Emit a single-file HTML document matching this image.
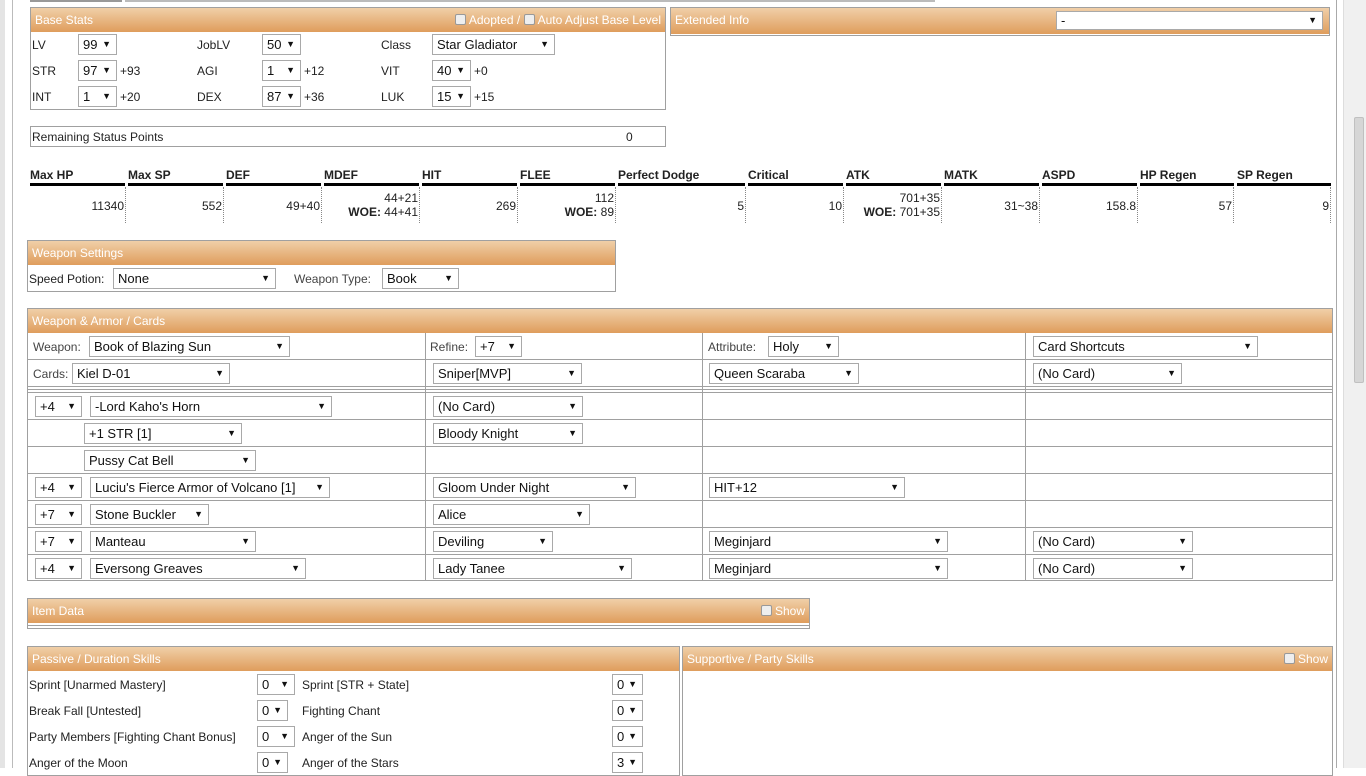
<!DOCTYPE html>
<html><head><meta charset="utf-8"><style>
*{box-sizing:border-box;margin:0;padding:0}
body{width:1366px;height:768px;overflow:hidden;background:#fff;font-family:"Liberation Sans",sans-serif;font-size:12px;color:#222;position:relative}
div,span{position:absolute}
.t{white-space:nowrap;line-height:14px}
.box{border:1px solid #a0a0a0;background:#fff}
.hd{background:linear-gradient(#f0cfa8,#df9d5c);color:#fff;white-space:nowrap;line-height:24px;padding-left:4px}
.s{border:1px solid #a9a9a9;background:#fff;height:21px;line-height:19px;padding-left:4px;white-space:nowrap;font-size:13px;color:#111}
.s:after{content:"▼";position:absolute;right:5px;top:0;font-size:9px}
.th{font-weight:bold;border-bottom:3px solid #000;height:18px;line-height:15px;padding-left:0;top:168px}
.td{top:187px;height:36px;border-right:1px dotted #888;text-align:right;padding-right:1px;line-height:14px}
.hl{height:1px;background:#a0a0a0}
.vl{width:1px;background:#a0a0a0}
.cb{display:inline-block;position:relative;width:11px;height:11px;border:1px solid #999;border-radius:2px;background:#eee;vertical-align:-1px;margin-right:3px}
</style></head><body>
<div style="left:0;top:0;width:5px;height:768px;background:#e4e4e4"></div>
<div style="left:12px;top:0;width:1px;height:768px;background:#bbb"></div>
<div style="left:1336px;top:0;width:1px;height:768px;background:#aaa"></div>
<div style="left:1343px;top:0;width:23px;height:768px;background:#f0f0f0;border-left:1px solid #ddd"></div>
<div style="left:1354px;top:117px;width:10px;height:266px;background:#d6d6d6;border:1px solid #c0c0c0;border-radius:2px"></div>
<div style="left:30px;top:0;width:92px;height:2px;background:#999"></div>
<div style="left:125px;top:0;width:810px;height:2px;background:#bbb"></div>

<div class="box" style="left:30px;top:7px;width:636px;height:103px"></div>
<div class="hd" style="left:31px;top:8px;width:634px;height:24px">Base Stats<span style="right:4px;top:0"><span class="cb"></span>Adopted / <span class="cb"></span>Auto Adjust Base Level</span></div>
<span class="t" style="left:32px;top:38px">LV</span><div class="s" style="left:78px;top:34px;width:39px">99</div>
<span class="t" style="left:197px;top:38px">JobLV</span><div class="s" style="left:262px;top:34px;width:39px">50</div>
<span class="t" style="left:381px;top:38px">Class</span><div class="s" style="left:432px;top:34px;width:123px">Star Gladiator</div>
<span class="t" style="left:32px;top:64px">STR</span><div class="s" style="left:78px;top:60px;width:39px">97</div><span class="t" style="left:120px;top:64px">+93</span>
<span class="t" style="left:197px;top:64px">AGI</span><div class="s" style="left:262px;top:60px;width:39px">1</div><span class="t" style="left:304px;top:64px">+12</span>
<span class="t" style="left:381px;top:64px">VIT</span><div class="s" style="left:432px;top:60px;width:39px">40</div><span class="t" style="left:474px;top:64px">+0</span>
<span class="t" style="left:32px;top:90px">INT</span><div class="s" style="left:78px;top:86px;width:39px">1</div><span class="t" style="left:120px;top:90px">+20</span>
<span class="t" style="left:197px;top:90px">DEX</span><div class="s" style="left:262px;top:86px;width:39px">87</div><span class="t" style="left:304px;top:90px">+36</span>
<span class="t" style="left:381px;top:90px">LUK</span><div class="s" style="left:432px;top:86px;width:39px">15</div><span class="t" style="left:474px;top:90px">+15</span>

<div class="box" style="left:670px;top:7px;width:660px;height:29px"></div>
<div class="hd" style="left:671px;top:8px;width:658px;height:26px">Extended Info</div>
<div class="s" style="left:1056px;top:11px;width:267px;height:19px;line-height:17px">-</div>

<div class="box" style="left:30px;top:126px;width:636px;height:21px"></div>
<span class="t" style="left:32px;top:130px">Remaining Status Points</span><span class="t" style="left:626px;top:130px">0</span>

<div class="th" style="left:30px;width:95px">Max HP</div>
<div class="th" style="left:128px;width:95px">Max SP</div>
<div class="th" style="left:226px;width:95px">DEF</div>
<div class="th" style="left:324px;width:95px">MDEF</div>
<div class="th" style="left:422px;width:95px">HIT</div>
<div class="th" style="left:520px;width:95px">FLEE</div>
<div class="th" style="left:618px;width:127px">Perfect Dodge</div>
<div class="th" style="left:748px;width:95px">Critical</div>
<div class="th" style="left:846px;width:95px">ATK</div>
<div class="th" style="left:944px;width:95px">MATK</div>
<div class="th" style="left:1042px;width:95px">ASPD</div>
<div class="th" style="left:1140px;width:94px">HP Regen</div>
<div class="th" style="left:1237px;width:94px">SP Regen</div>
<div class="td" style="left:30px;width:96px;padding-top:12px">11340</div>
<div class="td" style="left:126px;width:98px;padding-top:12px">552</div>
<div class="td" style="left:224px;width:98px;padding-top:12px">49+40</div>
<div class="td" style="left:322px;width:98px;padding-top:4px">44+21<br><b>WOE:</b> 44+41</div>
<div class="td" style="left:420px;width:98px;padding-top:12px">269</div>
<div class="td" style="left:518px;width:98px;padding-top:4px">112<br><b>WOE:</b> 89</div>
<div class="td" style="left:616px;width:130px;padding-top:12px">5</div>
<div class="td" style="left:746px;width:98px;padding-top:12px">10</div>
<div class="td" style="left:844px;width:98px;padding-top:4px">701+35<br><b>WOE:</b> 701+35</div>
<div class="td" style="left:942px;width:98px;padding-top:12px">31~38</div>
<div class="td" style="left:1040px;width:98px;padding-top:12px">158.8</div>
<div class="td" style="left:1138px;width:96px;padding-top:12px">57</div>
<div class="td" style="left:1234px;width:97px;padding-top:12px">9</div>

<div class="box" style="left:27px;top:240px;width:589px;height:52px"></div>
<div class="hd" style="left:28px;top:241px;width:587px;height:24px">Weapon Settings</div>
<span class="t" style="left:29px;top:272px">Speed Potion:</span><div class="s" style="left:113px;top:268px;width:163px">None</div>
<span class="t" style="left:294px;top:272px;color:#444">Weapon Type:</span><div class="s" style="left:382px;top:268px;width:77px">Book</div>

<div class="box" style="left:27px;top:308px;width:1306px;height:273px"></div>
<div class="hd" style="left:28px;top:309px;width:1304px;height:24px">Weapon &amp; Armor / Cards</div>
<div class="hl" style="left:28px;top:359px;width:1304px"></div>
<div class="hl" style="left:28px;top:386px;width:1304px"></div>
<div class="hl" style="left:28px;top:389px;width:1304px"></div>
<div class="hl" style="left:28px;top:392px;width:1304px"></div>
<div class="hl" style="left:28px;top:419px;width:1304px"></div>
<div class="hl" style="left:28px;top:446px;width:1304px"></div>
<div class="hl" style="left:28px;top:473px;width:1304px"></div>
<div class="hl" style="left:28px;top:500px;width:1304px"></div>
<div class="hl" style="left:28px;top:527px;width:1304px"></div>
<div class="hl" style="left:28px;top:554px;width:1304px"></div>
<div class="vl" style="left:425px;top:333px;height:247px"></div>
<div class="vl" style="left:702px;top:333px;height:247px"></div>
<div class="vl" style="left:1025px;top:333px;height:247px"></div>

<span class="t" style="left:33px;top:340px;color:#444">Weapon:</span><div class="s" style="left:89px;top:336px;width:201px">Book of Blazing Sun</div>
<span class="t" style="left:430px;top:340px;color:#444">Refine:</span><div class="s" style="left:475px;top:336px;width:47px">+7</div>
<span class="t" style="left:708px;top:340px;color:#444">Attribute:</span><div class="s" style="left:768px;top:336px;width:71px">Holy</div>
<div class="s" style="left:1033px;top:336px;width:225px">Card Shortcuts</div>

<span class="t" style="left:33px;top:367px;color:#444">Cards:</span><div class="s" style="left:72px;top:363px;width:158px">Kiel D-01</div>
<div class="s" style="left:433px;top:363px;width:149px">Sniper[MVP]</div>
<div class="s" style="left:709px;top:363px;width:150px">Queen Scaraba</div>
<div class="s" style="left:1033px;top:363px;width:149px">(No Card)</div>

<div class="s" style="left:35px;top:396px;width:47px">+4</div><div class="s" style="left:90px;top:396px;width:242px">-Lord Kaho's Horn</div><div class="s" style="left:433px;top:396px;width:150px">(No Card)</div>
<div class="s" style="left:84px;top:423px;width:158px">+1 STR [1]</div><div class="s" style="left:433px;top:423px;width:150px">Bloody Knight</div>
<div class="s" style="left:84px;top:450px;width:172px">Pussy Cat Bell</div>
<div class="s" style="left:35px;top:477px;width:47px">+4</div><div class="s" style="left:90px;top:477px;width:240px">Luciu's Fierce Armor of Volcano [1]</div><div class="s" style="left:433px;top:477px;width:203px">Gloom Under Night</div><div class="s" style="left:709px;top:477px;width:196px">HIT+12</div>
<div class="s" style="left:35px;top:504px;width:47px">+7</div><div class="s" style="left:90px;top:504px;width:119px">Stone Buckler</div><div class="s" style="left:433px;top:504px;width:157px">Alice</div>
<div class="s" style="left:35px;top:531px;width:47px">+7</div><div class="s" style="left:90px;top:531px;width:166px">Manteau</div><div class="s" style="left:433px;top:531px;width:120px">Deviling</div><div class="s" style="left:709px;top:531px;width:239px">Meginjard</div><div class="s" style="left:1033px;top:531px;width:160px">(No Card)</div>
<div class="s" style="left:35px;top:558px;width:47px">+4</div><div class="s" style="left:90px;top:558px;width:216px">Eversong Greaves</div><div class="s" style="left:433px;top:558px;width:199px">Lady Tanee</div><div class="s" style="left:709px;top:558px;width:239px">Meginjard</div><div class="s" style="left:1033px;top:558px;width:160px">(No Card)</div>

<div class="box" style="left:27px;top:598px;width:783px;height:31px"></div>
<div class="hd" style="left:28px;top:599px;width:781px;height:24px">Item Data<span style="right:4px;top:0"><span class="cb"></span>Show</span></div>
<div class="hl" style="left:28px;top:625px;width:781px"></div>

<div class="box" style="left:27px;top:646px;width:653px;height:130px"></div>
<div class="hd" style="left:28px;top:647px;width:651px;height:24px">Passive / Duration Skills</div>
<span class="t" style="left:29px;top:678px">Sprint [Unarmed Mastery]</span><div class="s" style="left:257px;top:674px;width:38px">0</div>
<span class="t" style="left:302px;top:678px">Sprint [STR + State]</span><div class="s" style="left:612px;top:674px;width:31px">0</div>
<span class="t" style="left:29px;top:704px">Break Fall [Untested]</span><div class="s" style="left:257px;top:700px;width:31px">0</div>
<span class="t" style="left:302px;top:704px">Fighting Chant</span><div class="s" style="left:612px;top:700px;width:31px">0</div>
<span class="t" style="left:29px;top:730px">Party Members [Fighting Chant Bonus]</span><div class="s" style="left:257px;top:726px;width:38px">0</div>
<span class="t" style="left:302px;top:730px">Anger of the Sun</span><div class="s" style="left:612px;top:726px;width:31px">0</div>
<span class="t" style="left:29px;top:756px">Anger of the Moon</span><div class="s" style="left:257px;top:752px;width:31px">0</div>
<span class="t" style="left:302px;top:756px">Anger of the Stars</span><div class="s" style="left:612px;top:752px;width:31px">3</div>

<div class="box" style="left:682px;top:646px;width:651px;height:130px"></div>
<div class="hd" style="left:683px;top:647px;width:649px;height:24px">Supportive / Party Skills<span style="right:4px;top:0"><span class="cb"></span>Show</span></div>
</body></html>
